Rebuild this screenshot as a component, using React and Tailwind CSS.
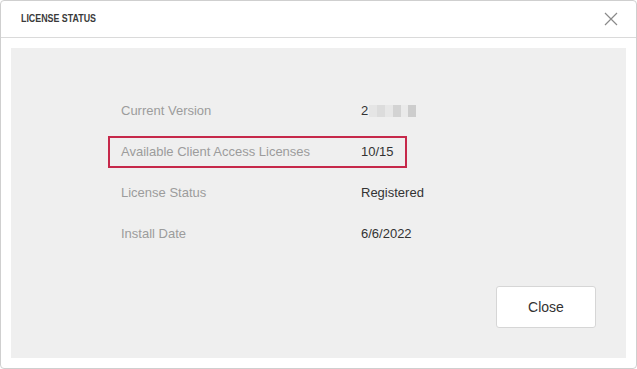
import React from 'react';

const rows = [
    { label: 'Current Version', value: 'version' },
    { label: 'Available Client Access Licenses', value: '10/15', highlight: true },
    { label: 'License Status', value: 'Registered' },
    { label: 'Install Date', value: '6/6/2022' },
];

// pixelated (redacted) version number
const BlurredVersion = () => (
    <span className="flex items-center">
        <span>2</span>
        <span className="flex h-[12px] ml-[1px]">
            <span className="w-[8px] bg-[#e5e5e5]"></span>
            <span className="w-[8px] bg-[#dcdcdc]"></span>
            <span className="w-[8px] bg-[#e7e7e7]"></span>
            <span className="w-[8px] bg-[#d3d3d3]"></span>
            <span className="w-[7px] bg-[#eaeaea]"></span>
            <span className="w-[8px] bg-[#cdcdcd]"></span>
        </span>
    </span>
);

const App = () => {
    return (
        <div className="w-[637px] h-[369px] bg-white border border-[#cfcfcf] rounded-[4px] flex flex-col overflow-hidden"
            style={{ fontFamily: '"Liberation Sans", Arial, sans-serif' }}>
            {/* Header */}
            <div className="h-[37px] flex items-center justify-between border-b border-[#dadada] pl-[20px] pr-[20px]">
                <h2 className="text-[11.5px] font-bold text-[#3a3a3a] inline-block origin-left scale-x-[0.77] whitespace-nowrap">
                    LICENSE STATUS
                </h2>
                <svg width="14" height="14" viewBox="0 0 14 14" className="mr-[-2px]">
                    <path d="M1 1 L13 13 M13 1 L1 13" stroke="#8a8a8a" strokeWidth="1.2" fill="none" />
                </svg>
            </div>

            {/* Body */}
            <div className="flex-1 px-[10px] pt-[10px] pb-[10px]">
                <div className="h-full bg-[#efefef] flex flex-col pt-[47px] pl-[97px] pr-[30px] pb-[30px]">
                    <div className="flex flex-col gap-[9px]">
                        {rows.map((row) => (
                            <div key={row.label}
                                className={`flex items-center h-[32px] w-[299px] pl-[11px] text-[13px] ${row.highlight ? 'border-2 border-[#c6284a]' : 'border-2 border-transparent'}`}>
                                <span className="w-[240px] shrink-0 text-[#9c9c9c] whitespace-nowrap">{row.label}</span>
                                <span className="text-[#333] whitespace-nowrap">
                                    {row.value === 'version' ? <BlurredVersion /> : row.value}
                                </span>
                            </div>
                        ))}
                    </div>
                    <div className="mt-auto flex justify-end">
                        <button className="w-[100px] h-[42px] bg-white border border-[#d6d6d6] rounded-[3px] text-[14px] text-[#333]">
                            Close
                        </button>
                    </div>
                </div>
            </div>
        </div>
    );
};

export default App;
